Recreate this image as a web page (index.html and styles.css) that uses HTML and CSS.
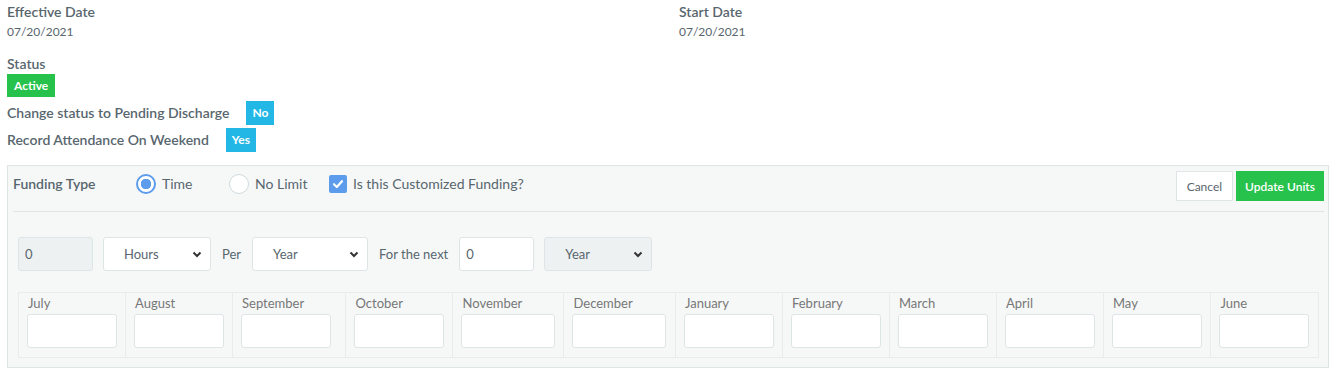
FILE: index.html
```html
<!DOCTYPE html>
<html>
<head>
    <meta charset="utf-8">
    <title>Funding</title>
    <link rel="stylesheet" href="styles.css">
</head>
<body>
    <div class="page">
        <div class="info-grid">
            <div class="field">
                <div class="field-label">Effective Date</div>
                <div class="field-value">07/20/2021</div>
            </div>
            <div class="field">
                <div class="field-label">Start Date</div>
                <div class="field-value">07/20/2021</div>
            </div>
        </div>

        <div class="status">
            <div class="field-label">Status</div>
            <span class="badge badge-success">Active</span>
        </div>
        <div class="toggle-row first">
            <span class="field-label">Change status to Pending Discharge</span>
            <span class="badge badge-info">No</span>
        </div>
        <div class="toggle-row">
            <span class="field-label">Record Attendance On Weekend</span>
            <span class="badge badge-info">Yes</span>
        </div>

        <div class="panel">
            <div class="panel-head">
                <div class="funding-options">
                    <span class="panel-title">Funding Type</span>
                    <label class="radio"><span class="radio-dot checked"></span>Time</label>
                    <label class="radio"><span class="radio-dot"></span>No Limit</label>
                    <label class="check">
                        <span class="check-box">
                            <svg width="12" height="12" viewBox="0 0 12 12"><path d="M2 6.2 L4.8 9 L10 3.2" fill="none" stroke="#fff" stroke-width="2.2" stroke-linecap="round" stroke-linejoin="round"/></svg>
                        </span>
                        Is this Customized Funding?
                    </label>
                </div>
                <div class="actions">
                    <button class="btn btn-default">Cancel</button>
                    <button class="btn btn-success">Update Units</button>
                </div>
            </div>

            <div class="panel-body">
                <div class="units-row">
                    <input class="form-control units-amount" value="0" disabled>
                    <div class="select-wrap unit-type">
                        <select class="form-control"><option>Hours</option></select>
                        <svg class="chevron" width="10" height="7" viewBox="0 0 10 7"><path d="M1.5 1.5 L5 5 L8.5 1.5" fill="none" stroke="#333" stroke-width="2"/></svg>
                    </div>
                    <span class="units-text">Per</span>
                    <div class="select-wrap unit-period">
                        <select class="form-control"><option>Year</option></select>
                        <svg class="chevron" width="10" height="7" viewBox="0 0 10 7"><path d="M1.5 1.5 L5 5 L8.5 1.5" fill="none" stroke="#333" stroke-width="2"/></svg>
                    </div>
                    <span class="units-text">For the next</span>
                    <input class="form-control units-next" value="0">
                    <div class="select-wrap unit-type">
                        <select class="form-control" disabled><option>Year</option></select>
                        <svg class="chevron" width="10" height="7" viewBox="0 0 10 7"><path d="M1.5 1.5 L5 5 L8.5 1.5" fill="none" stroke="#333" stroke-width="2"/></svg>
                    </div>
                </div>

                <div class="months">
                    <div class="month"><div class="month-name">July</div><input class="form-control"></div>
                    <div class="month"><div class="month-name">August</div><input class="form-control"></div>
                    <div class="month"><div class="month-name">September</div><input class="form-control"></div>
                    <div class="month"><div class="month-name">October</div><input class="form-control"></div>
                    <div class="month wide"><div class="month-name">November</div><input class="form-control"></div>
                    <div class="month wide"><div class="month-name">December</div><input class="form-control"></div>
                    <div class="month"><div class="month-name">January</div><input class="form-control"></div>
                    <div class="month"><div class="month-name">February</div><input class="form-control"></div>
                    <div class="month"><div class="month-name">March</div><input class="form-control"></div>
                    <div class="month"><div class="month-name">April</div><input class="form-control"></div>
                    <div class="month"><div class="month-name">May</div><input class="form-control"></div>
                    <div class="month"><div class="month-name">June</div><input class="form-control"></div>
                </div>
            </div>
        </div>

        <div class="field-label remarks">Remarks</div>
    </div>
</body>
</html>
```

FILE: styles.css
```css
* {
    margin: 0;
    padding: 0;
    box-sizing: border-box;
}

body {
    font-family: Lato, "Open Sans", sans-serif;
    font-size: 14px;
    color: #58666e;
    background: #fff;
}

.page {
    padding: 2px 7px 0 7px;
}

.info-grid {
    display: grid;
    grid-template-columns: 672px 1fr;
}

.field-label {
    font-weight: 600;
    line-height: 20px;
}

.field-value {
    font-size: 12px;
    line-height: 20px;
}

.status {
    margin-top: 12px;
}

.badge {
    display: inline-block;
    color: #fff;
    font-size: 12px;
    font-weight: 700;
    line-height: 18px;
    padding: 3px 7px;
}

.status .badge {
    padding: 3px 7px 2px 7px;
}

.badge-success {
    background: #27c24c;
}

.badge-info {
    background: #23b7e5;
}

.toggle-row {
    display: flex;
    align-items: center;
    margin-top: 3px;
}

.toggle-row.first {
    margin-top: 4px;
}

.toggle-row .badge {
    margin-left: 17px;
    padding: 3px 6px;
}

/* funding panel */
.panel {
    margin-top: 13px;
    background: #f6f8f8;
    border: 1px solid #dee5e7;
    padding-bottom: 9px;
}

.panel-head {
    display: flex;
    align-items: center;
    margin: 0 4px 0 5px;
    padding: 5px 0 10px 0;
    border-bottom: 1px solid #dee5e7;
}

.funding-options {
    display: flex;
    align-items: center;
    margin-bottom: 5px;
}

.panel-title {
    font-weight: 600;
    width: 123px;
}

.radio,
.check {
    display: flex;
    align-items: center;
    gap: 6px;
}

.radio {
    width: 93px;
}

.radio + .radio {
    width: 100px;
}

.radio-dot {
    width: 20px;
    height: 20px;
    border-radius: 50%;
    border: 1px solid #cfdadd;
    background: #fff;
}

.radio-dot.checked {
    border: 2px solid #5d9cec;
    background: radial-gradient(circle, #5d9cec 0 5px, #fff 5.5px);
}

.check-box {
    width: 18px;
    height: 18px;
    border-radius: 2px;
    background: #5d9cec;
    display: flex;
    align-items: center;
    justify-content: center;
}

.actions {
    margin-left: auto;
    display: flex;
    gap: 3px;
}

.btn {
    font-family: inherit;
    font-size: 12px;
    height: 30px;
    padding: 0 10px;
    border: 1px solid #dee5e7;
    cursor: pointer;
}

.btn-default {
    background: #fff;
    color: #58666e;
}

.btn-success {
    background: #27c24c;
    border-color: #27c24c;
    color: #fff;
    font-weight: 600;
    padding: 0 8px;
}

.panel-body {
    padding: 25px 9px 0 10px;
}

.form-control {
    font-family: inherit;
    font-size: 13px;
    color: #58666e;
    height: 34px;
    border: 1px solid #dee5e7;
    border-radius: 3px;
    background: #fff;
    padding: 0 6px;
    outline: none;
}

.form-control:disabled {
    background: #edf1f2;
    color: #58666e;
    -webkit-text-fill-color: #58666e;
    opacity: 1;
}

.units-row {
    display: flex;
    align-items: center;
    gap: 10px;
}

.units-amount,
.units-next {
    width: 75px;
}

.units-text {
    font-size: 13px;
    margin: 0 1px;
}

.select-wrap {
    position: relative;
}

.select-wrap select {
    appearance: none;
    width: 100%;
    padding-left: 20px;
}

.unit-type {
    width: 108px;
}

.unit-period {
    width: 116px;
}

.chevron {
    position: absolute;
    right: 9px;
    top: 14px;
    pointer-events: none;
}

.months {
    margin-top: 21px;
    display: grid;
    grid-template-columns: 107fr 107fr 114fr 107fr 111fr 112fr 107fr 107fr 107fr 107fr 108fr 108fr;
    border-top: 1px solid #e8eced;
    border-left: 1px solid #e8eced;
}

.month {
    border-right: 1px solid #e8eced;
    border-bottom: 1px solid #e8eced;
    padding: 1px 8px 9px 8px;
}

.month-name {
    font-size: 13px;
    color: #777;
    line-height: 18px;
    margin-bottom: 2px;
    padding-left: 1px;
}

.month .form-control {
    width: 90px;
}

.month.wide .form-control {
    width: 94px;
}

.remarks {
    margin-top: 4px;
}
```
